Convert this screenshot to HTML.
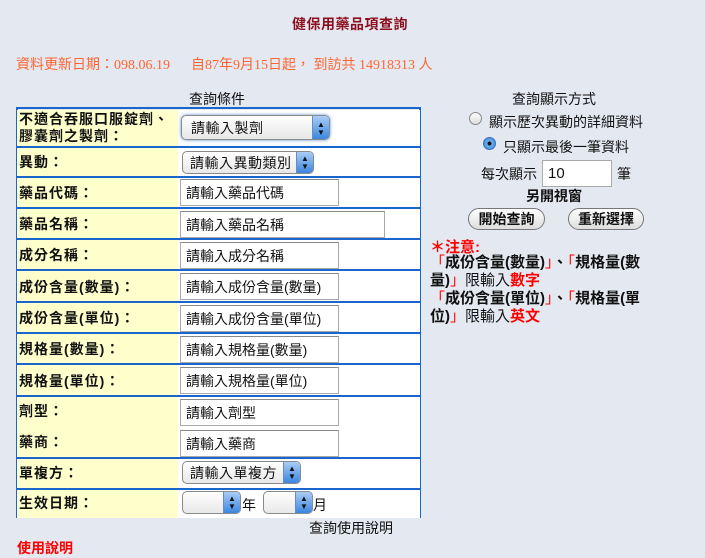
<!DOCTYPE html>
<html><head><meta charset="utf-8"><style>
body{margin:0;width:705px;height:542px;background:#e4e8f0;font-family:"Liberation Sans","Noto Sans CJK TC",sans-serif;position:relative;overflow:hidden;font-size:14px;color:#111}
.a{position:absolute;white-space:nowrap}
.lab{position:absolute;left:17px;width:161px;background:#ffffcc;font-weight:bold;font-size:14px;padding-left:3px;box-sizing:border-box}
.val{position:absolute;left:178px;width:242px;background:#fff}
.hl{position:absolute;left:16px;width:405px;height:2px;background:#1a66cc}
.inp{position:absolute;left:180px;height:27px;width:159px;border:1px solid #aaa;border-top-color:#888;background:#fff;box-sizing:border-box;font-size:14px;padding:3px 0 0 5px}
.sel{position:absolute;height:23px;border:1px solid #8a8a8a;border-radius:5px;background:linear-gradient(#fff,#e8e8e8);box-sizing:border-box;font-size:14px;padding:1px 0 0 7px;overflow:hidden;letter-spacing:0.5px}
.sel .ar{position:absolute;right:0;top:0;bottom:0;width:17px;background:linear-gradient(#a9cdf6,#3b86e0);border-left:1px solid #6a8cc0;color:#111;font-size:8px;line-height:8px;text-align:center;padding-top:3px;box-sizing:border-box;letter-spacing:0}
.btn{position:absolute;height:22px;border:1px solid #777;border-radius:11px;background:linear-gradient(#fff,#ddd);font-weight:bold;font-size:14px;text-align:center;line-height:21px;box-sizing:border-box}
.red{color:#ff0000}
.L{font-weight:bold;letter-spacing:1px}
</style></head><body>
<div class="a" style="left:292px;top:14px;font-weight:bold;color:#8b0f1e;font-size:14px;letter-spacing:0.5px">健保用藥品項查詢</div>
<div class="a" style="left:16px;top:54px;color:#ff6633;font-size:14px;font-family:'Liberation Serif','Noto Sans CJK TC',serif">資料更新日期：098.06.19&nbsp;&nbsp;&nbsp;&nbsp;&nbsp;&nbsp;自87年9月15日起， 到訪共 14918313 人</div>
<div class="a" style="left:189px;top:89px;font-size:14px">查詢條件</div>

<div style="position:absolute;left:16px;top:108px;width:2px;height:410px;background:#1a66cc"></div>
<div style="position:absolute;left:419px;top:108px;width:2px;height:410px;background:#1a66cc"></div>
<div class="lab" style="top:110px;height:408px"></div>
<div class="val" style="top:110px;height:408px"></div>

<div class="hl" style="top:107px"></div>
<div class="hl" style="top:146px"></div>
<div class="hl" style="top:176px"></div>
<div class="hl" style="top:207px"></div>
<div class="hl" style="top:238px"></div>
<div class="hl" style="top:269px"></div>
<div class="hl" style="top:301px"></div>
<div class="hl" style="top:332px"></div>
<div class="hl" style="top:363px"></div>
<div class="hl" style="top:395px"></div>
<div class="hl" style="top:457px"></div>
<div class="hl" style="top:488px"></div>

<div class="a L" style="left:19px;top:111px;line-height:17px">不適合吞服口服錠劑、<br>膠囊劑之製劑：</div>
<div class="a L" style="left:19px;top:152px">異動：</div>
<div class="a L" style="left:19px;top:183px">藥品代碼：</div>
<div class="a L" style="left:19px;top:214px">藥品名稱：</div>
<div class="a L" style="left:19px;top:245px">成分名稱：</div>
<div class="a L" style="left:19px;top:277px">成份含量(數量)：</div>
<div class="a L" style="left:19px;top:308px">成份含量(單位)：</div>
<div class="a L" style="left:19px;top:339px">規格量(數量)：</div>
<div class="a L" style="left:19px;top:371px">規格量(單位)：</div>
<div class="a L" style="left:19px;top:401px">劑型：</div>
<div class="a L" style="left:19px;top:432px">藥商：</div>
<div class="a L" style="left:19px;top:463px">單複方：</div>
<div class="a L" style="left:19px;top:493px">生效日期：</div>

<div class="sel" style="left:181px;top:115px;width:149px;height:25px;box-shadow:0 0 3px #5a8fd8;padding-top:2px"><span style="padding-left:2px">請輸入製劑</span><div class="ar" style="padding-top:5px">▲<br>▼</div></div>
<div class="sel" style="left:182px;top:151px;width:132px"><span>請輸入異動類別</span><div class="ar">▲<br>▼</div></div>
<div class="inp" style="top:179px">請輸入藥品代碼</div>
<div class="inp" style="top:211px;width:205px">請輸入藥品名稱</div>
<div class="inp" style="top:242px">請輸入成分名稱</div>
<div class="inp" style="top:273px">請輸入成份含量(數量)</div>
<div class="inp" style="top:305px">請輸入成份含量(單位)</div>
<div class="inp" style="top:336px">請輸入規格量(數量)</div>
<div class="inp" style="top:367px">請輸入規格量(單位)</div>
<div class="inp" style="top:399px">請輸入劑型</div>
<div class="inp" style="top:430px">請輸入藥商</div>
<div class="sel" style="left:182px;top:461px;width:119px"><span>請輸入單複方</span><div class="ar">▲<br>▼</div></div>
<div class="sel" style="left:182px;top:491px;width:59px"><div class="ar">▲<br>▼</div></div>
<div class="a" style="left:242px;top:495px">年</div>
<div class="sel" style="left:263px;top:491px;width:50px"><div class="ar">▲<br>▼</div></div>
<div class="a" style="left:313px;top:495px">月</div>

<div class="a" style="left:309px;top:518px">查詢使用說明</div>
<div class="a red" style="left:17px;top:538px;font-weight:bold">使用說明</div>

<div class="a" style="left:512px;top:89px">查詢顯示方式</div>
<div class="a" style="left:469px;top:112px;width:13px;height:13px;border-radius:50%;border:1px solid #888;background:linear-gradient(#fff,#ddd);box-sizing:border-box"></div>
<div class="a" style="left:489px;top:112px">顯示歷次異動的詳細資料</div>
<div class="a" style="left:483px;top:137px;width:13px;height:13px;border-radius:50%;border:1px solid #3a6fb8;background:radial-gradient(circle,#111 22%,#6fb0f0 30%,#2f7fd8 100%);box-sizing:border-box"></div>
<div class="a" style="left:503px;top:137px">只顯示最後一筆資料</div>
<div class="a" style="left:481px;top:164px">每次顯示</div>
<div class="a" style="left:542px;top:160px;width:70px;height:27px;border:1px solid #aaa;background:#fff;box-sizing:border-box;padding:4px 0 0 5px;font-size:15px">10</div>
<div class="a" style="left:617px;top:164px">筆</div>
<div class="a" style="left:526px;top:186px;font-weight:bold">另開視窗</div>
<div class="btn" style="left:468px;top:208px;width:77px">開始查詢</div>
<div class="btn" style="left:568px;top:208px;width:76px">重新選擇</div>
<div class="a red" style="left:430px;top:236px;font-weight:bold;font-size:15px">＊注意:</div>
<div class="a" style="left:430px;top:254px;font-weight:bold;line-height:18px;white-space:normal;width:238px;font-size:15px;word-break:break-all"><span class="red" style="font-weight:normal">「</span>成份含量(數量)<span class="red" style="font-weight:normal">」</span>、<span class="red" style="font-weight:normal">「</span>規格量(數量)<span class="red" style="font-weight:normal">」</span><span style="font-weight:normal">限輸入</span><span class="red">數字</span><br><span class="red" style="font-weight:normal">「</span>成份含量(單位)<span class="red" style="font-weight:normal">」</span>、<span class="red" style="font-weight:normal">「</span>規格量(單位)<span class="red" style="font-weight:normal">」</span><span style="font-weight:normal">限輸入</span><span class="red">英文</span></div>
</body></html>
